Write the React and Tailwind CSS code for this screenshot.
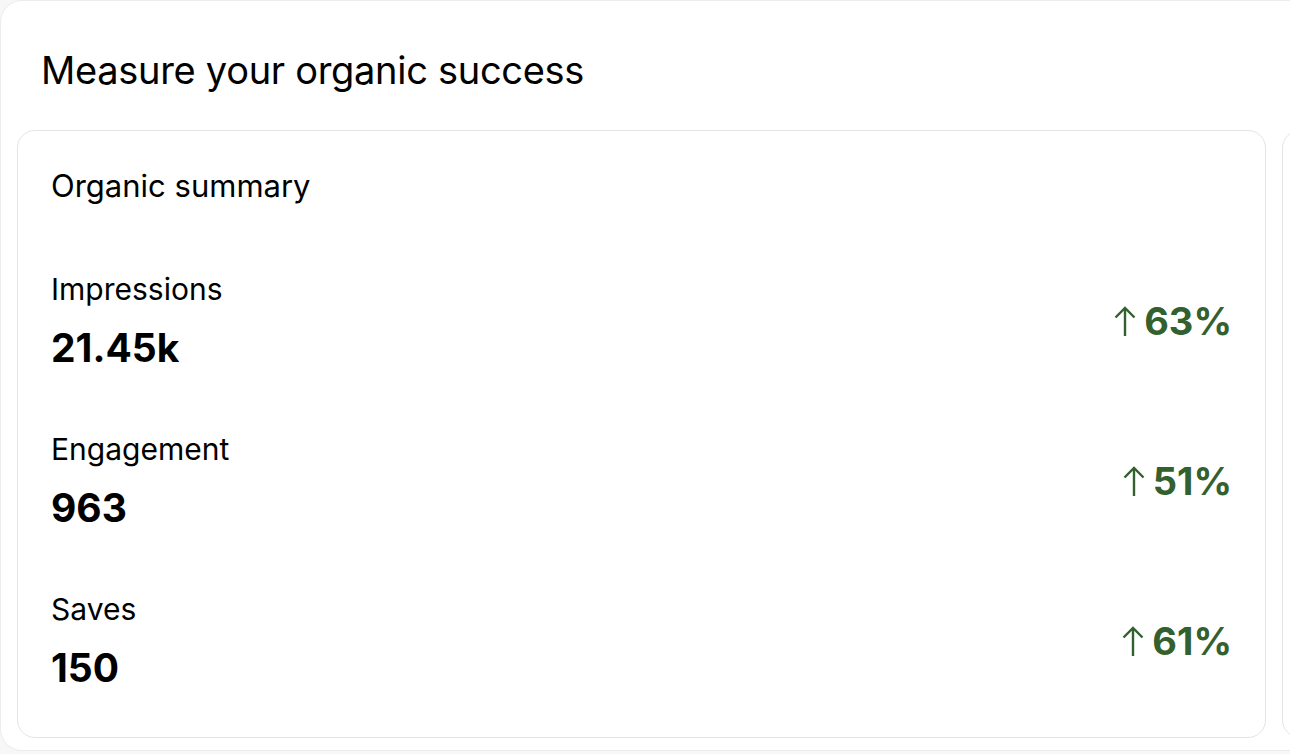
import React from 'react'

const rows = [
  { label: 'Impressions', value: '21.45k', change: '63%' },
  { label: 'Engagement', value: '963', change: '51%' },
  { label: 'Saves', value: '150', change: '61%' },
]

const UpArrow = () => (
  <svg width="22" height="30" viewBox="0 0 22 30" fill="none" stroke="#32602e" strokeWidth="2.4" strokeLinecap="butt">
    <path d="M11 2v28" />
    <path d="M1.5 11.5L11 2l9.5 9.5" />
  </svg>
)

export default function App() {
  return (
    <div className="w-full h-[754px] bg-[#f7f7f7] overflow-hidden font-['Inter',sans-serif] text-black">
      <div className="w-[1340px] h-[751px] bg-white rounded-[22px] border border-[#ececec] pl-4">
        {/* header */}
        <h1 className="pl-6 pt-[45px] text-[38px] leading-[48px] tracking-[-0.3px]">Measure your organic success</h1>

        <div className="flex gap-[16px] mt-[36px]">
          {/* summary card */}
          <div className="w-[1249px] h-[608px] shrink-0 rounded-[18px] border border-[#e4e4e4] px-[33px] pt-[36px]">
            <h2 className="text-[31px] leading-[38px]">Organic summary</h2>
            <div className="mt-[65px] flex flex-col gap-[58px]">
              {rows.map((r) => (
                <div key={r.label} className="flex items-center justify-between">
                  <div>
                    <div className="text-[30px] leading-[38px]">{r.label}</div>
                    <div className="mt-4 text-[39px] leading-[48px] font-bold">{r.value}</div>
                  </div>
                  <div className="flex items-center gap-[8px] text-[38px] font-bold text-[#32602e]">
                    <UpArrow />
                    <span>{r.change}</span>
                  </div>
                </div>
              ))}
            </div>
          </div>
          {/* next card peeking */}
          <div className="w-[300px] h-[608px] shrink-0 rounded-[18px] border border-[#e4e4e4]" />
        </div>
      </div>
    </div>
  )
}
